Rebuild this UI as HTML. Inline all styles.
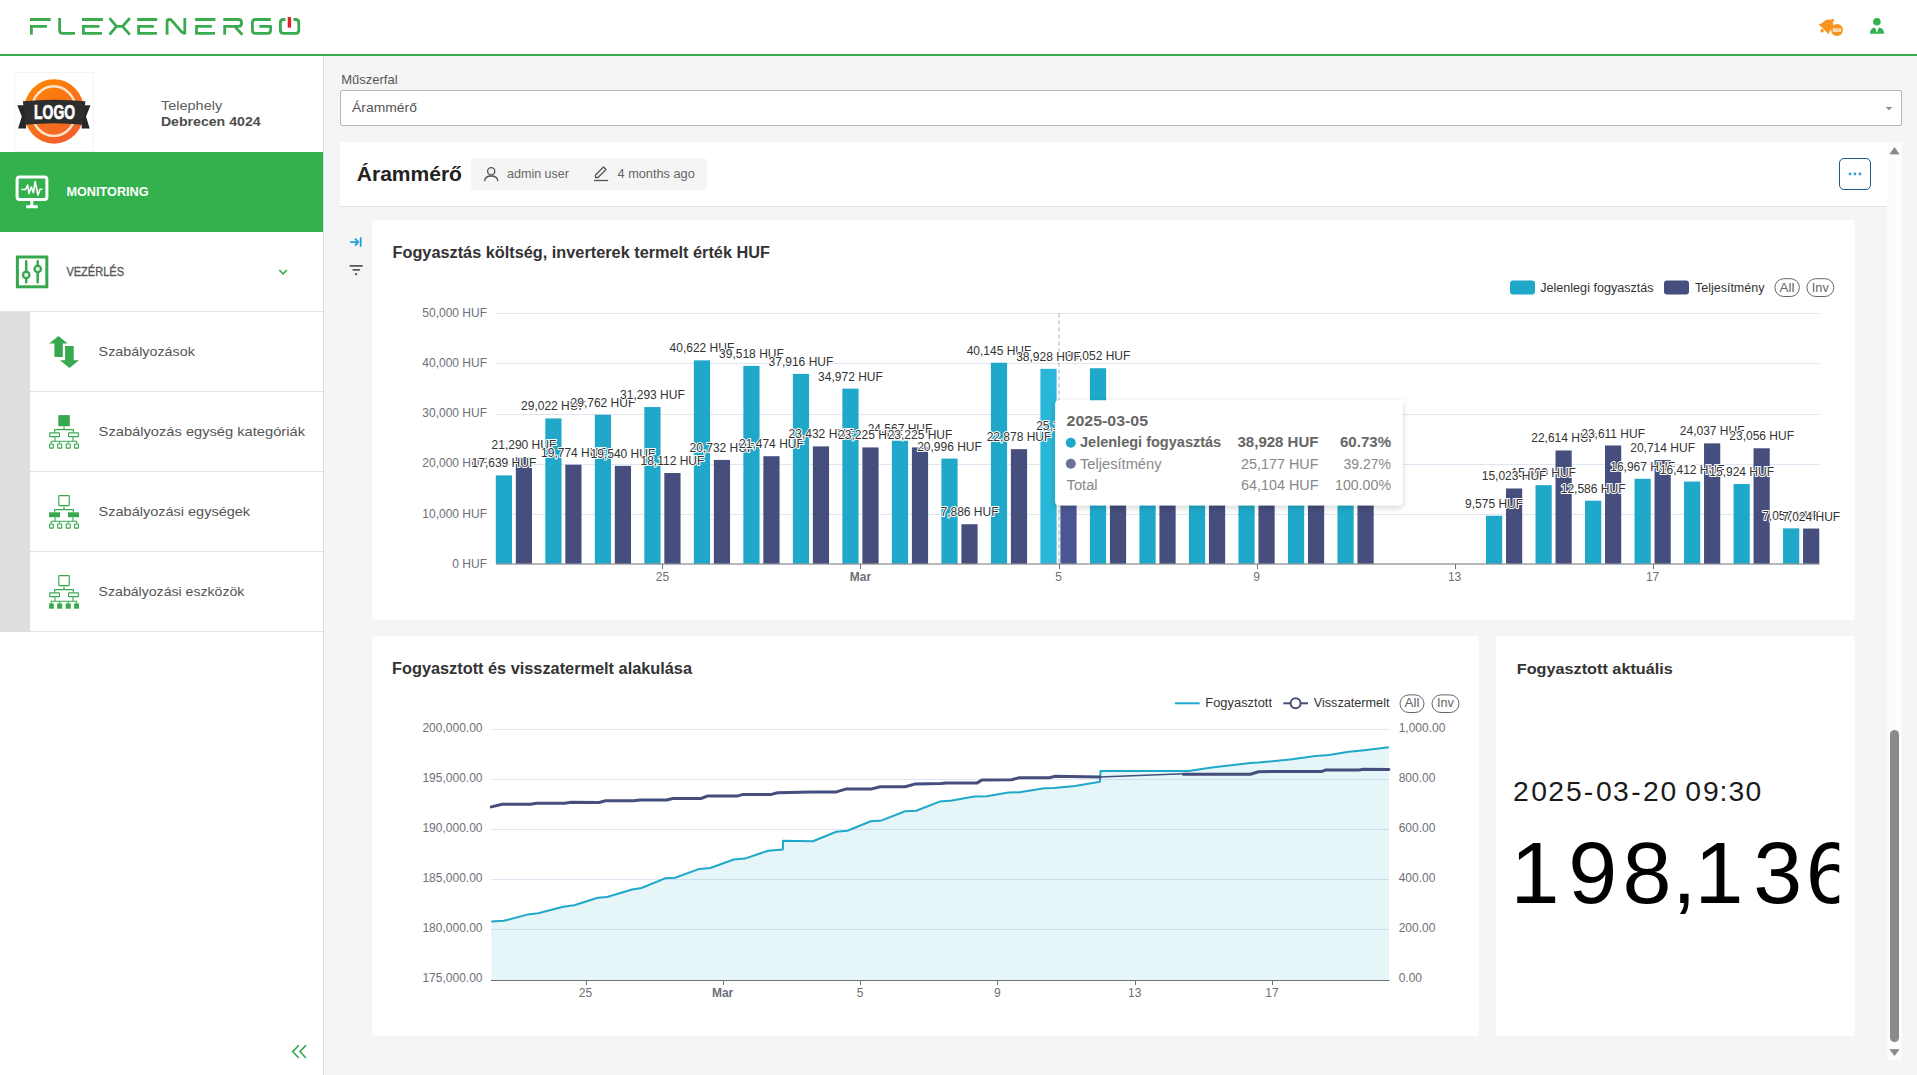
<!DOCTYPE html>
<html><head><meta charset="utf-8"><title>Árammérő</title>
<style>
html,body{margin:0;padding:0;width:1917px;height:1075px;overflow:hidden;background:#fff;font-family:"Liberation Sans",sans-serif;}
#ov{position:absolute;left:0;top:0;}
</style></head><body>
<div style="position:absolute;left:0px;top:0px;width:1917px;height:54px;background:#fff"></div><div style="position:absolute;left:0px;top:54px;width:1917px;height:2px;background:#3aaa4f"></div><div style="position:absolute;left:0px;top:56px;width:323px;height:1019px;background:#fff"></div><div style="position:absolute;left:323px;top:56px;width:1px;height:1019px;background:#dcdcdc"></div><div style="position:absolute;left:14px;top:72px;width:80px;height:80px;background:#fff;border:1px solid #f4f4f4;box-sizing:border-box"></div><div style="position:absolute;left:0px;top:152px;width:323px;height:80px;background:#33b14d"></div><div style="position:absolute;left:0px;top:311px;width:323px;height:1px;background:#e3e3e3"></div><div style="position:absolute;left:0px;top:312px;width:30px;height:320px;background:#dedede"></div><div style="position:absolute;left:30px;top:391px;width:293px;height:1px;background:#e3e3e3"></div><div style="position:absolute;left:30px;top:471px;width:293px;height:1px;background:#e3e3e3"></div><div style="position:absolute;left:30px;top:551px;width:293px;height:1px;background:#e3e3e3"></div><div style="position:absolute;left:30px;top:631px;width:293px;height:1px;background:#e3e3e3"></div><div style="position:absolute;left:324px;top:56px;width:1593px;height:1019px;background:#f5f5f5"></div><div style="position:absolute;left:340px;top:90px;width:1562px;height:36px;background:#fff;border:1px solid #b8b8b8;border-radius:2px;box-sizing:border-box"></div><div style="position:absolute;left:340px;top:142px;width:1547px;height:64px;background:#fff"></div><div style="position:absolute;left:340px;top:206px;width:1547px;height:1px;background:#e3e3e3"></div><div style="position:absolute;left:1887px;top:142px;width:15px;height:918px;background:#fcfcfc"></div><div style="position:absolute;left:1890px;top:730px;width:9px;height:312px;background:#8a8a8a;border-radius:5px"></div><div style="position:absolute;left:471px;top:158px;width:236px;height:32px;background:#f5f5f5;border-radius:4px"></div><div style="position:absolute;left:1839px;top:158px;width:32px;height:32px;background:#fff;border:1.5px solid #1d5a8c;border-radius:5px;box-sizing:border-box"></div><div style="position:absolute;left:372px;top:220px;width:1483px;height:400px;background:#fff;border-radius:4px"></div><div style="position:absolute;left:372px;top:636px;width:1107px;height:400px;background:#fff;border-radius:4px"></div><div style="position:absolute;left:1496px;top:636px;width:359px;height:400px;background:#fff;border-radius:4px"></div>
<svg id="ov" width="1917" height="1075" viewBox="0 0 1917 1075" font-family="Liberation Sans, sans-serif"><defs><linearGradient id="og" x1="0" y1="0" x2="0.6" y2="1"><stop offset="0" stop-color="#ff8a00"/><stop offset="1" stop-color="#f4612a"/></linearGradient><filter id="tsh" x="-20%" y="-20%" width="140%" height="150%"><feDropShadow dx="0" dy="2" stdDeviation="3" flood-color="#000" flood-opacity="0.18"/></filter></defs><path d="M30,19.5H50.7 M30,26.4H46.9 M31.4,25.0V34.7 M59.6,18V30.3 Q59.6,33.3 62.5,33.3 H75 M82,19.5H102.9 M82,26.4H99.5 M83.4,25.0V33.3 M82,33.3H102 M109.5,18.2 L116.5,26.4 H122.5 L129.8,18.2 M109.5,34.6 L116.5,26.4 M122.5,26.4 L129.8,34.6 M137.2,19.5H157.2 M137.2,26.4H153.8 M138.6,25.0V33.3 M137.2,33.3H156.9 M167.1,34.7V21.5 Q167.1,19.5 169.5,19.5 Q171,19.5 172.5,21.3 L181.5,31.8 Q183,33.3 184.8,33.3 V18 M195.1,19.5H215.4 M195.1,26.4H211.9 M196.5,25.0V33.3 M195.1,33.3H215 M223.3,19.5H238.5 Q241.6,19.5 241.6,22.9 Q241.6,26.4 238.5,26.4 H223.3 M224.7,25.0V34.7 M235.5,27.4 L242.4,34.7 M270.8,19.5H255.5 Q252.4,19.5 252.4,22.6 V30.2 Q252.4,33.3 255.5,33.3 H267.5 Q270.6,33.3 270.6,30.2 V26.4 H259.3 M285.5,19.5H283.2 Q280.4,19.5 280.4,22.6 V30.2 Q280.4,33.3 283.5,33.3 H295.7 Q298.8,33.3 298.8,30.2 V22.6 Q298.8,19.5 295.7,19.5 H293.4" fill="none" stroke="#3aaa4f" stroke-width="2.8" stroke-linejoin="round"/><rect x="287.7" y="17.1" width="3.4" height="10.5" fill="#e02228"/><g fill="#f7931e" transform="translate(1827.2,25.7) rotate(45)"><circle cx="0" cy="-7.6" r="1.6"/><path d="M-7.2,5 Q-5.8,3.6 -5.4,0 Q-5,-6.3 0,-6.6 Q5,-6.3 5.4,0 Q5.8,3.6 7.2,5 Z"/><circle cx="0" cy="7.2" r="1.7"/></g><circle cx="1837" cy="30" r="6" fill="#f7931e"/><text x="1837" y="32" font-size="5.6" font-weight="bold" fill="#fff" text-anchor="middle" textLength="8.5" lengthAdjust="spacingAndGlyphs">999</text><g fill="#33b14d"><circle cx="1876.9" cy="21.7" r="3.8"/><path d="M1870,33.8 Q1870,28.5 1874.5,27.6 L1876.9,31 L1879.3,27.6 Q1884,28.5 1884,33.8 Z"/></g><rect x="1876.3" y="27.2" width="1.2" height="5" fill="#fff"/><ellipse cx="54" cy="111.45" rx="30.3" ry="32.3" fill="url(#og)"/><ellipse cx="53.8" cy="111.1" rx="22.3" ry="24.8" fill="none" stroke="#fde6cc" stroke-width="2.4"/><path d="M17.3,105.2 L25,105.2 L26.2,128.5 L18.1,128.5 L21.8,116.6 Z M90.5,105.2 L82.8,105.2 L81.6,128.5 L89.7,128.5 L86,116.6 Z" fill="#262626"/><path d="M22.9,101.2 Q54,98.2 85.4,101.2 L82.6,124.8 Q54,121.6 25.4,124.8 Z" fill="#2d2d2d"/><text x="34.1" y="119.2" font-size="21" font-weight="bold" fill="#fff" stroke="#fff" stroke-width="0.7" textLength="41" lengthAdjust="spacingAndGlyphs">LOGO</text><text x="160.90" y="110.00" font-size="13" fill="#606060" textLength="61.30" lengthAdjust="spacingAndGlyphs" >Telephely</text><text x="160.90" y="125.90" font-size="13" fill="#4d4d4d" font-weight="bold" textLength="99.70" lengthAdjust="spacingAndGlyphs" >Debrecen 4024</text><text x="66.40" y="196.20" font-size="13" fill="#fff" font-weight="bold" textLength="82.20" lengthAdjust="spacingAndGlyphs" >MONITORING</text><text x="66.40" y="276.00" font-size="13" fill="#555" textLength="57.70" lengthAdjust="spacingAndGlyphs" stroke="#555" stroke-width="0.3">VEZÉRLÉS</text><text x="98.60" y="356.20" font-size="13" fill="#555" textLength="96.20" lengthAdjust="spacingAndGlyphs" >Szabályozások</text><text x="98.60" y="436.20" font-size="13" fill="#555" textLength="206.40" lengthAdjust="spacingAndGlyphs" >Szabályozás egység kategóriák</text><text x="98.60" y="516.20" font-size="13" fill="#555" textLength="151.50" lengthAdjust="spacingAndGlyphs" >Szabályozási egységek</text><text x="98.60" y="596.30" font-size="13" fill="#555" textLength="145.80" lengthAdjust="spacingAndGlyphs" >Szabályozási eszközök</text><g fill="none" stroke="#fff" stroke-width="3"><rect x="17.1" y="176.9" width="29.8" height="22.5" rx="2.5"/><path d="M31.85,200.5V206.8 M26.1,206.8H37.8"/></g><polyline points="21.3,189.5 25.5,189.5 27.6,185 29,193.5 31.3,187 33.4,192.6 35.1,181.5 38,195 40.1,189.3 42.4,189.3" fill="none" stroke="#fff" stroke-width="1.6" stroke-linejoin="round"/><g fill="none" stroke="#37a84e"><rect x="17.4" y="257" width="29.4" height="29.8" stroke-width="3"/><path d="M26.2,261.3V271.7 M26.2,278.1V282.2 M37.7,261.3V265.8 M37.7,272.2V282.2" stroke-width="2.5" stroke-linecap="round"/><circle cx="26.2" cy="274.9" r="3.2" stroke-width="2.4"/><circle cx="37.7" cy="269" r="3.2" stroke-width="2.4"/></g><polyline points="279.3,270 283.1,273.8 286.9,270" fill="none" stroke="#37a84e" stroke-width="1.6"/><g fill="#37a84e"><path d="M58.5,335.9 L67.6,343.5 L62.8,343.5 L62.8,357.1 L54.4,357.1 L54.4,343.5 L49.1,343.5 Z"/><path d="M69.4,367.9 L79,360.3 L73.7,360.3 L73.7,346 L65.1,346 L65.1,360.3 L60,360.3 Z"/></g><g><rect x="58.3" y="415.1" width="11.50" height="11.10" fill="#37a84e"/><rect x="49.65" y="432.85" width="9.80" height="3.80" rx="0.4" fill="none" stroke="#37a84e" stroke-width="1.15"/><rect x="68.55" y="432.85" width="9.90" height="3.80" rx="0.4" fill="none" stroke="#37a84e" stroke-width="1.15"/><rect x="49.65" y="443.95" width="3.60" height="4.20" rx="0.4" fill="none" stroke="#37a84e" stroke-width="1.15"/><rect x="57.65" y="443.95" width="4.00" height="4.20" rx="0.4" fill="none" stroke="#37a84e" stroke-width="1.15"/><rect x="66.25" y="443.95" width="4.00" height="4.20" rx="0.4" fill="none" stroke="#37a84e" stroke-width="1.15"/><rect x="74.65" y="443.95" width="3.80" height="4.20" rx="0.4" fill="none" stroke="#37a84e" stroke-width="1.15"/><g transform="translate(0,0)"><path d="M64,426.2V429.6 M54.7,432.3V429.6H73.3V432.3 M55,437.2V441.3 M73,437.2V441.3 M51.2,443.4V441.3H76.6V443.4 M59.6,441.3V443.4 M68.2,441.3V443.4" fill="none" stroke="#37a84e" stroke-width="1.1"/></g></g><g><rect x="58.85" y="495.65" width="10.40" height="10.00" rx="0.4" fill="none" stroke="#37a84e" stroke-width="1.15"/><rect x="49.1" y="512.3" width="10.90" height="4.90" fill="#37a84e"/><rect x="68" y="512.3" width="11.00" height="4.90" fill="#37a84e"/><rect x="49.65" y="523.95" width="3.60" height="4.20" rx="0.4" fill="none" stroke="#37a84e" stroke-width="1.15"/><rect x="57.65" y="523.95" width="4.00" height="4.20" rx="0.4" fill="none" stroke="#37a84e" stroke-width="1.15"/><rect x="66.25" y="523.95" width="4.00" height="4.20" rx="0.4" fill="none" stroke="#37a84e" stroke-width="1.15"/><rect x="74.65" y="523.95" width="3.80" height="4.20" rx="0.4" fill="none" stroke="#37a84e" stroke-width="1.15"/><g transform="translate(0,80)"><path d="M64,426.2V429.6 M54.7,432.3V429.6H73.3V432.3 M55,437.2V441.3 M73,437.2V441.3 M51.2,443.4V441.3H76.6V443.4 M59.6,441.3V443.4 M68.2,441.3V443.4" fill="none" stroke="#37a84e" stroke-width="1.1"/></g></g><g><rect x="58.85" y="575.65" width="10.40" height="10.00" rx="0.4" fill="none" stroke="#37a84e" stroke-width="1.15"/><rect x="49.65" y="592.85" width="9.80" height="3.80" rx="0.4" fill="none" stroke="#37a84e" stroke-width="1.15"/><rect x="68.55" y="592.85" width="9.90" height="3.80" rx="0.4" fill="none" stroke="#37a84e" stroke-width="1.15"/><rect x="49.1" y="603.4" width="4.70" height="5.30" fill="#37a84e"/><rect x="57.1" y="603.4" width="5.10" height="5.30" fill="#37a84e"/><rect x="65.7" y="603.4" width="5.10" height="5.30" fill="#37a84e"/><rect x="74.1" y="603.4" width="4.90" height="5.30" fill="#37a84e"/><g transform="translate(0,160)"><path d="M64,426.2V429.6 M54.7,432.3V429.6H73.3V432.3 M55,437.2V441.3 M73,437.2V441.3 M51.2,443.4V441.3H76.6V443.4 M59.6,441.3V443.4 M68.2,441.3V443.4" fill="none" stroke="#37a84e" stroke-width="1.1"/></g></g><g fill="none" stroke="#37a84e" stroke-width="1.6" stroke-linecap="round"><polyline points="298.4,1045.7 292.7,1051.6 298.4,1057.5"/><polyline points="305.5,1045.7 299.9,1051.6 305.5,1057.5"/></g><text x="341.30" y="84.30" font-size="13" fill="#555" textLength="56.30" lengthAdjust="spacingAndGlyphs" >Műszerfal</text><text x="352.00" y="112.00" font-size="13" fill="#555" textLength="64.90" lengthAdjust="spacingAndGlyphs" >Árammérő</text><path d="M1885.6,107.1 L1892.3,107.1 L1889,110.3 Z" fill="#8a8a8a"/><text x="356.80" y="181.00" font-size="21" fill="#222" font-weight="bold" textLength="105.10" lengthAdjust="spacingAndGlyphs" >Árammérő</text><g fill="none" stroke="#555" stroke-width="1.3"><circle cx="491.2" cy="171.3" r="3.6"/><path d="M484.6,181.2 Q484.8,176 491.2,176 Q497.6,176 497.8,181.2"/></g><text x="507.00" y="178.00" font-size="12.5" fill="#666" textLength="62.00" lengthAdjust="spacingAndGlyphs" >admin user</text><g fill="none" stroke="#555" stroke-width="1.3" stroke-linejoin="round"><path d="M595.5,177.5 L595.5,175 L603.5,167 L606,169.5 L598,177.5 Z"/><path d="M594,180.5H608.2"/></g><text x="617.50" y="178.00" font-size="12.5" fill="#666" textLength="77.30" lengthAdjust="spacingAndGlyphs" >4 months ago</text><g fill="#2a9fd6"><circle cx="1850" cy="174" r="1.4"/><circle cx="1855" cy="174" r="1.4"/><circle cx="1860" cy="174" r="1.4"/></g><path d="M1890,154 L1899,154 L1894.5,147.5 Z" fill="#8a8a8a" stroke="#8a8a8a" stroke-width="0.8" stroke-linejoin="round"/><path d="M1890,1049.5 L1899,1049.5 L1894.5,1055.5 Z" fill="#8a8a8a" stroke="#8a8a8a" stroke-width="0.8" stroke-linejoin="round"/><g fill="none" stroke="#1ea0d8" stroke-width="1.8"><path d="M350.2,242.1H357.8 M355,238.7 L358.3,242.1 L355,245.5"/><path d="M360.7,237.3V246.8"/></g><g stroke="#555" stroke-width="1.8" stroke-linecap="round"><path d="M350.3,265.9H362 M353.3,269.8H359.2"/></g><circle cx="356.1" cy="274.2" r="1.15" fill="#555"/><text x="392.50" y="258.00" font-size="16" fill="#333" font-weight="bold" textLength="377.50" lengthAdjust="spacingAndGlyphs" >Fogyasztás költség, inverterek termelt érték HUF</text><rect x="1510" y="280.6" width="25" height="14" rx="3" fill="#1fa8c9"/><text x="1540.20" y="291.50" font-size="12" fill="#333" textLength="113.50" lengthAdjust="spacingAndGlyphs" >Jelenlegi fogyasztás</text><rect x="1664" y="280.6" width="25" height="14" rx="3" fill="#454e7c"/><text x="1695.00" y="291.50" font-size="12" fill="#333" textLength="69.40" lengthAdjust="spacingAndGlyphs" >Teljesítmény</text><rect x="1774.9" y="278.7" width="24.5" height="17.8" rx="8.9" fill="none" stroke="#666" stroke-width="1"/><text x="1787.10" y="291.50" font-size="12" fill="#666" text-anchor="middle" textLength="15.00" lengthAdjust="spacingAndGlyphs" >All</text><rect x="1806.9" y="278.7" width="26.9" height="17.8" rx="8.9" fill="none" stroke="#666" stroke-width="1"/><text x="1820.30" y="291.50" font-size="12" fill="#666" text-anchor="middle" textLength="17.00" lengthAdjust="spacingAndGlyphs" >Inv</text><path d="M496,514.5H1819" stroke="#e0e6f1" stroke-width="1"/><path d="M496,464.5H1819" stroke="#e0e6f1" stroke-width="1"/><path d="M496,414.5H1819" stroke="#e0e6f1" stroke-width="1"/><path d="M496,363.5H1819" stroke="#e0e6f1" stroke-width="1"/><path d="M496,313.5H1819" stroke="#e0e6f1" stroke-width="1"/><text x="487.00" y="567.60" font-size="12" fill="#6e7079" text-anchor="end" >0 HUF</text><text x="487.00" y="517.54" font-size="12" fill="#6e7079" text-anchor="end" >10,000 HUF</text><text x="487.00" y="467.48" font-size="12" fill="#6e7079" text-anchor="end" >20,000 HUF</text><text x="487.00" y="417.42" font-size="12" fill="#6e7079" text-anchor="end" >30,000 HUF</text><text x="487.00" y="367.36" font-size="12" fill="#6e7079" text-anchor="end" >40,000 HUF</text><text x="487.00" y="317.30" font-size="12" fill="#6e7079" text-anchor="end" >50,000 HUF</text><rect x="495.80" y="475.40" width="16.2" height="88.30" fill="#1fa8c9"/><rect x="515.80" y="457.12" width="16.2" height="106.58" fill="#454e7c"/><rect x="545.31" y="418.42" width="16.2" height="145.28" fill="#1fa8c9"/><rect x="565.31" y="464.71" width="16.2" height="98.99" fill="#454e7c"/><rect x="594.82" y="414.71" width="16.2" height="148.99" fill="#1fa8c9"/><rect x="614.82" y="465.88" width="16.2" height="97.82" fill="#454e7c"/><rect x="644.33" y="407.05" width="16.2" height="156.65" fill="#1fa8c9"/><rect x="664.33" y="473.03" width="16.2" height="90.67" fill="#454e7c"/><rect x="693.84" y="360.35" width="16.2" height="203.35" fill="#1fa8c9"/><rect x="713.84" y="459.92" width="16.2" height="103.78" fill="#454e7c"/><rect x="743.35" y="365.87" width="16.2" height="197.83" fill="#1fa8c9"/><rect x="763.35" y="456.20" width="16.2" height="107.50" fill="#454e7c"/><rect x="792.86" y="373.89" width="16.2" height="189.81" fill="#1fa8c9"/><rect x="812.86" y="446.40" width="16.2" height="117.30" fill="#454e7c"/><rect x="842.37" y="388.63" width="16.2" height="175.07" fill="#1fa8c9"/><rect x="862.37" y="447.44" width="16.2" height="116.26" fill="#454e7c"/><rect x="891.88" y="440.72" width="16.2" height="122.98" fill="#1fa8c9"/><rect x="911.88" y="447.44" width="16.2" height="116.26" fill="#454e7c"/><rect x="941.39" y="458.59" width="16.2" height="105.11" fill="#1fa8c9"/><rect x="961.39" y="524.22" width="16.2" height="39.48" fill="#454e7c"/><rect x="990.90" y="362.73" width="16.2" height="200.97" fill="#1fa8c9"/><rect x="1010.90" y="449.17" width="16.2" height="114.53" fill="#454e7c"/><rect x="1040.41" y="368.83" width="16.2" height="194.87" fill="#29b6d8"/><rect x="1060.41" y="437.66" width="16.2" height="126.04" fill="#4b5591"/><rect x="1089.92" y="368.21" width="16.2" height="195.49" fill="#1fa8c9"/><rect x="1109.92" y="453.57" width="16.2" height="110.13" fill="#454e7c"/><rect x="1139.43" y="433.54" width="16.2" height="130.16" fill="#1fa8c9"/><rect x="1159.43" y="458.57" width="16.2" height="105.13" fill="#454e7c"/><rect x="1188.94" y="443.56" width="16.2" height="120.14" fill="#1fa8c9"/><rect x="1208.94" y="448.56" width="16.2" height="115.14" fill="#454e7c"/><rect x="1238.45" y="428.54" width="16.2" height="135.16" fill="#1fa8c9"/><rect x="1258.45" y="451.07" width="16.2" height="112.63" fill="#454e7c"/><rect x="1287.96" y="438.55" width="16.2" height="125.15" fill="#1fa8c9"/><rect x="1307.96" y="456.07" width="16.2" height="107.63" fill="#454e7c"/><rect x="1337.47" y="446.06" width="16.2" height="117.64" fill="#1fa8c9"/><rect x="1357.47" y="461.08" width="16.2" height="102.62" fill="#454e7c"/><rect x="1486.00" y="515.77" width="16.2" height="47.93" fill="#1fa8c9"/><rect x="1506.00" y="488.49" width="16.2" height="75.21" fill="#454e7c"/><rect x="1535.51" y="485.16" width="16.2" height="78.54" fill="#1fa8c9"/><rect x="1555.51" y="450.49" width="16.2" height="113.21" fill="#454e7c"/><rect x="1585.02" y="500.69" width="16.2" height="63.01" fill="#1fa8c9"/><rect x="1605.02" y="445.50" width="16.2" height="118.20" fill="#454e7c"/><rect x="1634.53" y="478.76" width="16.2" height="84.94" fill="#1fa8c9"/><rect x="1654.53" y="460.01" width="16.2" height="103.69" fill="#454e7c"/><rect x="1684.04" y="481.54" width="16.2" height="82.16" fill="#1fa8c9"/><rect x="1704.04" y="443.37" width="16.2" height="120.33" fill="#454e7c"/><rect x="1733.55" y="483.98" width="16.2" height="79.72" fill="#1fa8c9"/><rect x="1753.55" y="448.28" width="16.2" height="115.42" fill="#454e7c"/><rect x="1783.06" y="528.37" width="16.2" height="35.33" fill="#1fa8c9"/><rect x="1803.06" y="528.54" width="16.2" height="35.16" fill="#454e7c"/><path d="M496,564H1819.5" stroke="#6e7079" stroke-width="1"/><path d="M662.5,564V569" stroke="#6e7079" stroke-width="1"/><text x="662.43" y="580.90" font-size="12" fill="#6e7079" text-anchor="middle" >25</text><path d="M860.5,564V569" stroke="#6e7079" stroke-width="1"/><text x="860.47" y="580.90" font-size="12" fill="#6e7079" font-weight="bold" text-anchor="middle" >Mar</text><path d="M1059.5,564V569" stroke="#6e7079" stroke-width="1"/><text x="1058.51" y="580.90" font-size="12" fill="#6e7079" text-anchor="middle" >5</text><path d="M1257.5,564V569" stroke="#6e7079" stroke-width="1"/><text x="1256.55" y="580.90" font-size="12" fill="#6e7079" text-anchor="middle" >9</text><path d="M1455.5,564V569" stroke="#6e7079" stroke-width="1"/><text x="1454.59" y="580.90" font-size="12" fill="#6e7079" text-anchor="middle" >13</text><path d="M1653.5,564V569" stroke="#6e7079" stroke-width="1"/><text x="1652.63" y="580.90" font-size="12" fill="#6e7079" text-anchor="middle" >17</text><path d="M1059.0,313.5V563" stroke="#aaa" stroke-width="1" stroke-dasharray="4,3"/><text x="503.90" y="467.40" font-size="12" fill="#333" text-anchor="middle" stroke="#fff" stroke-width="2" paint-order="stroke" stroke-linejoin="round">17,639 HUF</text><text x="553.41" y="410.42" font-size="12" fill="#333" text-anchor="middle" stroke="#fff" stroke-width="2" paint-order="stroke" stroke-linejoin="round">29,022 HUF</text><text x="602.92" y="406.71" font-size="12" fill="#333" text-anchor="middle" stroke="#fff" stroke-width="2" paint-order="stroke" stroke-linejoin="round">29,762 HUF</text><text x="652.43" y="399.05" font-size="12" fill="#333" text-anchor="middle" stroke="#fff" stroke-width="2" paint-order="stroke" stroke-linejoin="round">31,293 HUF</text><text x="701.94" y="352.35" font-size="12" fill="#333" text-anchor="middle" stroke="#fff" stroke-width="2" paint-order="stroke" stroke-linejoin="round">40,622 HUF</text><text x="751.45" y="357.87" font-size="12" fill="#333" text-anchor="middle" stroke="#fff" stroke-width="2" paint-order="stroke" stroke-linejoin="round">39,518 HUF</text><text x="800.96" y="365.89" font-size="12" fill="#333" text-anchor="middle" stroke="#fff" stroke-width="2" paint-order="stroke" stroke-linejoin="round">37,916 HUF</text><text x="850.47" y="380.63" font-size="12" fill="#333" text-anchor="middle" stroke="#fff" stroke-width="2" paint-order="stroke" stroke-linejoin="round">34,972 HUF</text><text x="899.98" y="432.72" font-size="12" fill="#333" text-anchor="middle" stroke="#fff" stroke-width="2" paint-order="stroke" stroke-linejoin="round">24,567 HUF</text><text x="949.49" y="450.59" font-size="12" fill="#333" text-anchor="middle" stroke="#fff" stroke-width="2" paint-order="stroke" stroke-linejoin="round">20,996 HUF</text><text x="999.00" y="354.73" font-size="12" fill="#333" text-anchor="middle" stroke="#fff" stroke-width="2" paint-order="stroke" stroke-linejoin="round">40,145 HUF</text><text x="1098.02" y="360.21" font-size="12" fill="#333" text-anchor="middle" stroke="#fff" stroke-width="2" paint-order="stroke" stroke-linejoin="round">39,052 HUF</text><text x="1147.53" y="425.54" font-size="12" fill="#333" text-anchor="middle" stroke="#fff" stroke-width="2" paint-order="stroke" stroke-linejoin="round">26,000 HUF</text><text x="1197.04" y="435.56" font-size="12" fill="#333" text-anchor="middle" stroke="#fff" stroke-width="2" paint-order="stroke" stroke-linejoin="round">24,000 HUF</text><text x="1246.55" y="420.54" font-size="12" fill="#333" text-anchor="middle" stroke="#fff" stroke-width="2" paint-order="stroke" stroke-linejoin="round">27,000 HUF</text><text x="1296.06" y="430.55" font-size="12" fill="#333" text-anchor="middle" stroke="#fff" stroke-width="2" paint-order="stroke" stroke-linejoin="round">25,000 HUF</text><text x="1345.57" y="438.06" font-size="12" fill="#333" text-anchor="middle" stroke="#fff" stroke-width="2" paint-order="stroke" stroke-linejoin="round">23,500 HUF</text><text x="1494.10" y="507.77" font-size="12" fill="#333" text-anchor="middle" stroke="#fff" stroke-width="2" paint-order="stroke" stroke-linejoin="round">9,575 HUF</text><text x="1543.61" y="477.16" font-size="12" fill="#333" text-anchor="middle" stroke="#fff" stroke-width="2" paint-order="stroke" stroke-linejoin="round">15,690 HUF</text><text x="1593.12" y="492.69" font-size="12" fill="#333" text-anchor="middle" stroke="#fff" stroke-width="2" paint-order="stroke" stroke-linejoin="round">12,586 HUF</text><text x="1642.63" y="470.76" font-size="12" fill="#333" text-anchor="middle" stroke="#fff" stroke-width="2" paint-order="stroke" stroke-linejoin="round">16,967 HUF</text><text x="1692.14" y="473.54" font-size="12" fill="#333" text-anchor="middle" stroke="#fff" stroke-width="2" paint-order="stroke" stroke-linejoin="round">16,412 HUF</text><text x="1741.65" y="475.98" font-size="12" fill="#333" text-anchor="middle" stroke="#fff" stroke-width="2" paint-order="stroke" stroke-linejoin="round">15,924 HUF</text><text x="1791.16" y="520.37" font-size="12" fill="#333" text-anchor="middle" stroke="#fff" stroke-width="2" paint-order="stroke" stroke-linejoin="round">7,057 HUF</text><text x="523.90" y="449.12" font-size="12" fill="#333" text-anchor="middle" stroke="#fff" stroke-width="2" paint-order="stroke" stroke-linejoin="round">21,290 HUF</text><text x="573.41" y="456.71" font-size="12" fill="#333" text-anchor="middle" stroke="#fff" stroke-width="2" paint-order="stroke" stroke-linejoin="round">19,774 HUF</text><text x="622.92" y="457.88" font-size="12" fill="#333" text-anchor="middle" stroke="#fff" stroke-width="2" paint-order="stroke" stroke-linejoin="round">19,540 HUF</text><text x="672.43" y="465.03" font-size="12" fill="#333" text-anchor="middle" stroke="#fff" stroke-width="2" paint-order="stroke" stroke-linejoin="round">18,112 HUF</text><text x="721.94" y="451.92" font-size="12" fill="#333" text-anchor="middle" stroke="#fff" stroke-width="2" paint-order="stroke" stroke-linejoin="round">20,732 HUF</text><text x="771.45" y="448.20" font-size="12" fill="#333" text-anchor="middle" stroke="#fff" stroke-width="2" paint-order="stroke" stroke-linejoin="round">21,474 HUF</text><text x="820.96" y="438.40" font-size="12" fill="#333" text-anchor="middle" stroke="#fff" stroke-width="2" paint-order="stroke" stroke-linejoin="round">23,432 HUF</text><text x="870.47" y="439.44" font-size="12" fill="#333" text-anchor="middle" stroke="#fff" stroke-width="2" paint-order="stroke" stroke-linejoin="round">23,225 HUF</text><text x="919.98" y="439.44" font-size="12" fill="#333" text-anchor="middle" stroke="#fff" stroke-width="2" paint-order="stroke" stroke-linejoin="round">23,225 HUF</text><text x="969.49" y="516.22" font-size="12" fill="#333" text-anchor="middle" stroke="#fff" stroke-width="2" paint-order="stroke" stroke-linejoin="round">7,886 HUF</text><text x="1019.00" y="441.17" font-size="12" fill="#333" text-anchor="middle" stroke="#fff" stroke-width="2" paint-order="stroke" stroke-linejoin="round">22,878 HUF</text><text x="1118.02" y="445.57" font-size="12" fill="#333" text-anchor="middle" stroke="#fff" stroke-width="2" paint-order="stroke" stroke-linejoin="round">22,000 HUF</text><text x="1167.53" y="450.57" font-size="12" fill="#333" text-anchor="middle" stroke="#fff" stroke-width="2" paint-order="stroke" stroke-linejoin="round">21,000 HUF</text><text x="1217.04" y="440.56" font-size="12" fill="#333" text-anchor="middle" stroke="#fff" stroke-width="2" paint-order="stroke" stroke-linejoin="round">23,000 HUF</text><text x="1266.55" y="443.07" font-size="12" fill="#333" text-anchor="middle" stroke="#fff" stroke-width="2" paint-order="stroke" stroke-linejoin="round">22,500 HUF</text><text x="1316.06" y="448.07" font-size="12" fill="#333" text-anchor="middle" stroke="#fff" stroke-width="2" paint-order="stroke" stroke-linejoin="round">21,500 HUF</text><text x="1365.57" y="453.08" font-size="12" fill="#333" text-anchor="middle" stroke="#fff" stroke-width="2" paint-order="stroke" stroke-linejoin="round">20,500 HUF</text><text x="1514.10" y="480.49" font-size="12" fill="#333" text-anchor="middle" stroke="#fff" stroke-width="2" paint-order="stroke" stroke-linejoin="round">15,023 HUF</text><text x="1563.61" y="442.49" font-size="12" fill="#333" text-anchor="middle" stroke="#fff" stroke-width="2" paint-order="stroke" stroke-linejoin="round">22,614 HUF</text><text x="1613.12" y="437.50" font-size="12" fill="#333" text-anchor="middle" stroke="#fff" stroke-width="2" paint-order="stroke" stroke-linejoin="round">23,611 HUF</text><text x="1662.63" y="452.01" font-size="12" fill="#333" text-anchor="middle" stroke="#fff" stroke-width="2" paint-order="stroke" stroke-linejoin="round">20,714 HUF</text><text x="1712.14" y="435.37" font-size="12" fill="#333" text-anchor="middle" stroke="#fff" stroke-width="2" paint-order="stroke" stroke-linejoin="round">24,037 HUF</text><text x="1761.65" y="440.28" font-size="12" fill="#333" text-anchor="middle" stroke="#fff" stroke-width="2" paint-order="stroke" stroke-linejoin="round">23,056 HUF</text><text x="1811.16" y="520.54" font-size="12" fill="#333" text-anchor="middle" stroke="#fff" stroke-width="2" paint-order="stroke" stroke-linejoin="round">7,024 HUF</text><text x="1048.51" y="360.83" font-size="12" fill="#333" text-anchor="middle" stroke="#fff" stroke-width="2" paint-order="stroke" stroke-linejoin="round">38,928 HUF</text><text x="1068.51" y="429.66" font-size="12" fill="#333" text-anchor="middle" stroke="#fff" stroke-width="2" paint-order="stroke" stroke-linejoin="round">25,177 HUF</text><rect x="1055.1" y="400.3" width="347.7" height="105.2" rx="4" fill="#fff" filter="url(#tsh)"/><text x="1066.60" y="426.30" font-size="14" fill="#666" font-weight="bold" textLength="81.50" lengthAdjust="spacingAndGlyphs" >2025-03-05</text><circle cx="1070.8" cy="442.8" r="5" fill="#1fa8c9"/><text x="1080.00" y="447.40" font-size="14" fill="#666" font-weight="bold" textLength="141.20" lengthAdjust="spacingAndGlyphs" >Jelenlegi fogyasztás</text><text x="1318.50" y="447.40" font-size="14" fill="#666" font-weight="bold" text-anchor="end" textLength="81.00" lengthAdjust="spacingAndGlyphs" >38,928 HUF</text><text x="1391.00" y="447.40" font-size="14" fill="#666" font-weight="bold" text-anchor="end" textLength="51.00" lengthAdjust="spacingAndGlyphs" >60.73%</text><circle cx="1070.8" cy="463.8" r="5" fill="#6c7399"/><text x="1080.00" y="468.60" font-size="14" fill="#888" textLength="81.50" lengthAdjust="spacingAndGlyphs" >Teljesítmény</text><text x="1318.50" y="468.60" font-size="14" fill="#888" text-anchor="end" textLength="77.50" lengthAdjust="spacingAndGlyphs" >25,177 HUF</text><text x="1391.00" y="468.60" font-size="14" fill="#888" text-anchor="end" textLength="47.50" lengthAdjust="spacingAndGlyphs" >39.27%</text><text x="1066.60" y="489.80" font-size="14" fill="#888" textLength="31.00" lengthAdjust="spacingAndGlyphs" >Total</text><text x="1318.50" y="489.80" font-size="14" fill="#888" text-anchor="end" textLength="77.50" lengthAdjust="spacingAndGlyphs" >64,104 HUF</text><text x="1391.00" y="489.80" font-size="14" fill="#888" text-anchor="end" textLength="56.00" lengthAdjust="spacingAndGlyphs" >100.00%</text><text x="392.00" y="674.00" font-size="16" fill="#333" font-weight="bold" textLength="300.00" lengthAdjust="spacingAndGlyphs" >Fogyasztott és visszatermelt alakulása</text><path d="M1174.9,703.3H1199.6" stroke="#1fa8c9" stroke-width="2"/><text x="1205.30" y="706.80" font-size="12" fill="#333" textLength="66.70" lengthAdjust="spacingAndGlyphs" >Fogyasztott</text><path d="M1283.3,703.3H1308" stroke="#454e7c" stroke-width="2"/><circle cx="1295.6" cy="703.3" r="5" fill="#fff" stroke="#454e7c" stroke-width="2"/><text x="1313.70" y="706.80" font-size="12" fill="#333" textLength="75.80" lengthAdjust="spacingAndGlyphs" >Visszatermelt</text><rect x="1400" y="694.9" width="24" height="17.6" rx="8.8" fill="none" stroke="#666" stroke-width="1"/><text x="1411.90" y="706.80" font-size="12" fill="#666" text-anchor="middle" textLength="15.00" lengthAdjust="spacingAndGlyphs" >All</text><rect x="1432" y="694.9" width="27" height="17.6" rx="8.8" fill="none" stroke="#666" stroke-width="1"/><text x="1445.40" y="706.80" font-size="12" fill="#666" text-anchor="middle" textLength="17.00" lengthAdjust="spacingAndGlyphs" >Inv</text><text x="482.50" y="982.00" font-size="12" fill="#6e7079" text-anchor="end" >175,000.00</text><text x="1398.70" y="982.00" font-size="12" fill="#6e7079" >0.00</text><path d="M491,929.5H1389.5" stroke="#e0e6f1" stroke-width="1"/><text x="482.50" y="932.00" font-size="12" fill="#6e7079" text-anchor="end" >180,000.00</text><text x="1398.70" y="932.00" font-size="12" fill="#6e7079" >200.00</text><path d="M491,879.5H1389.5" stroke="#e0e6f1" stroke-width="1"/><text x="482.50" y="882.00" font-size="12" fill="#6e7079" text-anchor="end" >185,000.00</text><text x="1398.70" y="882.00" font-size="12" fill="#6e7079" >400.00</text><path d="M491,829.5H1389.5" stroke="#e0e6f1" stroke-width="1"/><text x="482.50" y="832.00" font-size="12" fill="#6e7079" text-anchor="end" >190,000.00</text><text x="1398.70" y="832.00" font-size="12" fill="#6e7079" >600.00</text><path d="M491,779.5H1389.5" stroke="#e0e6f1" stroke-width="1"/><text x="482.50" y="782.00" font-size="12" fill="#6e7079" text-anchor="end" >195,000.00</text><text x="1398.70" y="782.00" font-size="12" fill="#6e7079" >800.00</text><path d="M491,729.5H1389.5" stroke="#e0e6f1" stroke-width="1"/><text x="482.50" y="732.00" font-size="12" fill="#6e7079" text-anchor="end" >200,000.00</text><text x="1398.70" y="732.00" font-size="12" fill="#6e7079" >1,000.00</text><polygon points="491.3,980 491.3,921.6 503.8,920.8 527.3,914.6 538.2,913.3 563.2,906.8 574.2,905.2 597.7,897.7 607.0,897.0 632.1,889.5 641.5,888.0 665.0,878.3 675.1,877.8 699.4,868.9 710.3,868.0 733.8,859.5 744.8,858.6 768.2,850.7 782.8,849.4 783.1,840.8 812.9,841.2 836.3,831.7 847.3,830.8 870.8,821.2 881.7,820.4 905.2,811.3 916.2,810.7 939.6,801.6 952.1,800.4 974.0,796.6 986.6,796.3 1008.5,792.6 1019.4,792.3 1044.5,788.3 1053.9,787.9 1075.0,785.9 1100.0,781.8 1100.5,770.9 1188.5,770.9 1211.9,767.6 1250.3,763.0 1258.6,762.6 1292.0,759.2 1315.4,755.9 1328.8,755.0 1348.8,751.7 1362.1,750.4 1388.9,747.2 1388.9,980" fill="#1aa8b8" fill-opacity="0.11"/><polyline points="491.3,921.6 503.8,920.8 527.3,914.6 538.2,913.3 563.2,906.8 574.2,905.2 597.7,897.7 607.0,897.0 632.1,889.5 641.5,888.0 665.0,878.3 675.1,877.8 699.4,868.9 710.3,868.0 733.8,859.5 744.8,858.6 768.2,850.7 782.8,849.4 783.1,840.8 812.9,841.2 836.3,831.7 847.3,830.8 870.8,821.2 881.7,820.4 905.2,811.3 916.2,810.7 939.6,801.6 952.1,800.4 974.0,796.6 986.6,796.3 1008.5,792.6 1019.4,792.3 1044.5,788.3 1053.9,787.9 1075.0,785.9 1100.0,781.8 1100.5,770.9 1188.5,770.9 1211.9,767.6 1250.3,763.0 1258.6,762.6 1292.0,759.2 1315.4,755.9 1328.8,755.0 1348.8,751.7 1362.1,750.4 1388.9,747.2" fill="none" stroke="#1fa8c9" stroke-width="2" stroke-linejoin="round"/><polyline points="491.3,806.9 502.2,804.3 530.4,804.3 536.6,803.2 564.8,803.2 571.0,802.2 599.2,802.5 605.5,800.8 633.7,800.8 640.0,800.0 666.5,800.0 672.8,798.5 701.0,798.5 707.2,796.1 737.0,796.1 743.2,794.4 771.4,794.4 777.6,792.8 811.3,792.0 836.3,791.9 845.7,789.1 870.8,789.1 880.2,786.8 905.2,786.8 914.6,784.1 941.2,783.6 945.9,782.9 977.2,782.9 981.9,780.0 1011.6,779.7 1019.4,777.7 1049.2,777.7 1055.4,776.3 1100.0,777.1" fill="none" stroke="#454e7c" stroke-width="3" stroke-linejoin="round" stroke-linecap="round"/><polyline points="1100,777.1 1183.5,773.7" fill="none" stroke="#454e7c" stroke-width="1.5"/><polyline points="1183.5,774.2 1250.3,774.2 1258.6,771.7 1287.0,771.4 1322.0,771.4 1325.4,770.1 1358.8,770.1 1363.8,769.2 1388.9,769.5" fill="none" stroke="#454e7c" stroke-width="3" stroke-linejoin="round" stroke-linecap="round"/><path d="M491,980.5H1389.5" stroke="#6e7079" stroke-width="1"/><path d="M586.5,980.5V985" stroke="#6e7079" stroke-width="1"/><text x="585.50" y="997.00" font-size="12" fill="#6e7079" text-anchor="middle" >25</text><path d="M723.5,980.5V985" stroke="#6e7079" stroke-width="1"/><text x="722.60" y="997.00" font-size="12" fill="#6e7079" font-weight="bold" text-anchor="middle" >Mar</text><path d="M860.5,980.5V985" stroke="#6e7079" stroke-width="1"/><text x="860.00" y="997.00" font-size="12" fill="#6e7079" text-anchor="middle" >5</text><path d="M997.5,980.5V985" stroke="#6e7079" stroke-width="1"/><text x="997.30" y="997.00" font-size="12" fill="#6e7079" text-anchor="middle" >9</text><path d="M1135.5,980.5V985" stroke="#6e7079" stroke-width="1"/><text x="1134.70" y="997.00" font-size="12" fill="#6e7079" text-anchor="middle" >13</text><path d="M1272.5,980.5V985" stroke="#6e7079" stroke-width="1"/><text x="1272.00" y="997.00" font-size="12" fill="#6e7079" text-anchor="middle" >17</text><text x="1516.80" y="673.50" font-size="15" fill="#333" font-weight="bold" textLength="156.00" lengthAdjust="spacingAndGlyphs" >Fogyasztott aktuális</text><defs><clipPath id="numclip"><rect x="1496" y="636" width="343.2" height="400"/></clipPath></defs><g clip-path="url(#numclip)"><text x="1512.95 1531.15 1548.25 1565.88 1583.70 1596.05 1613.03 1631.30 1643.05 1660.55 1677.07 1685.25 1702.95 1719.58 1728.43 1745.45" y="800.6" font-size="28.3" fill="#1a1a1a" >2025-03-20 09:30</text><text x="1510.49 1568.23 1622.43 1672.01 1694.49 1753.24 1805.87 1859.84" y="903" font-size="88" fill="#000" >198,1364</text></g></svg>
</body></html>
